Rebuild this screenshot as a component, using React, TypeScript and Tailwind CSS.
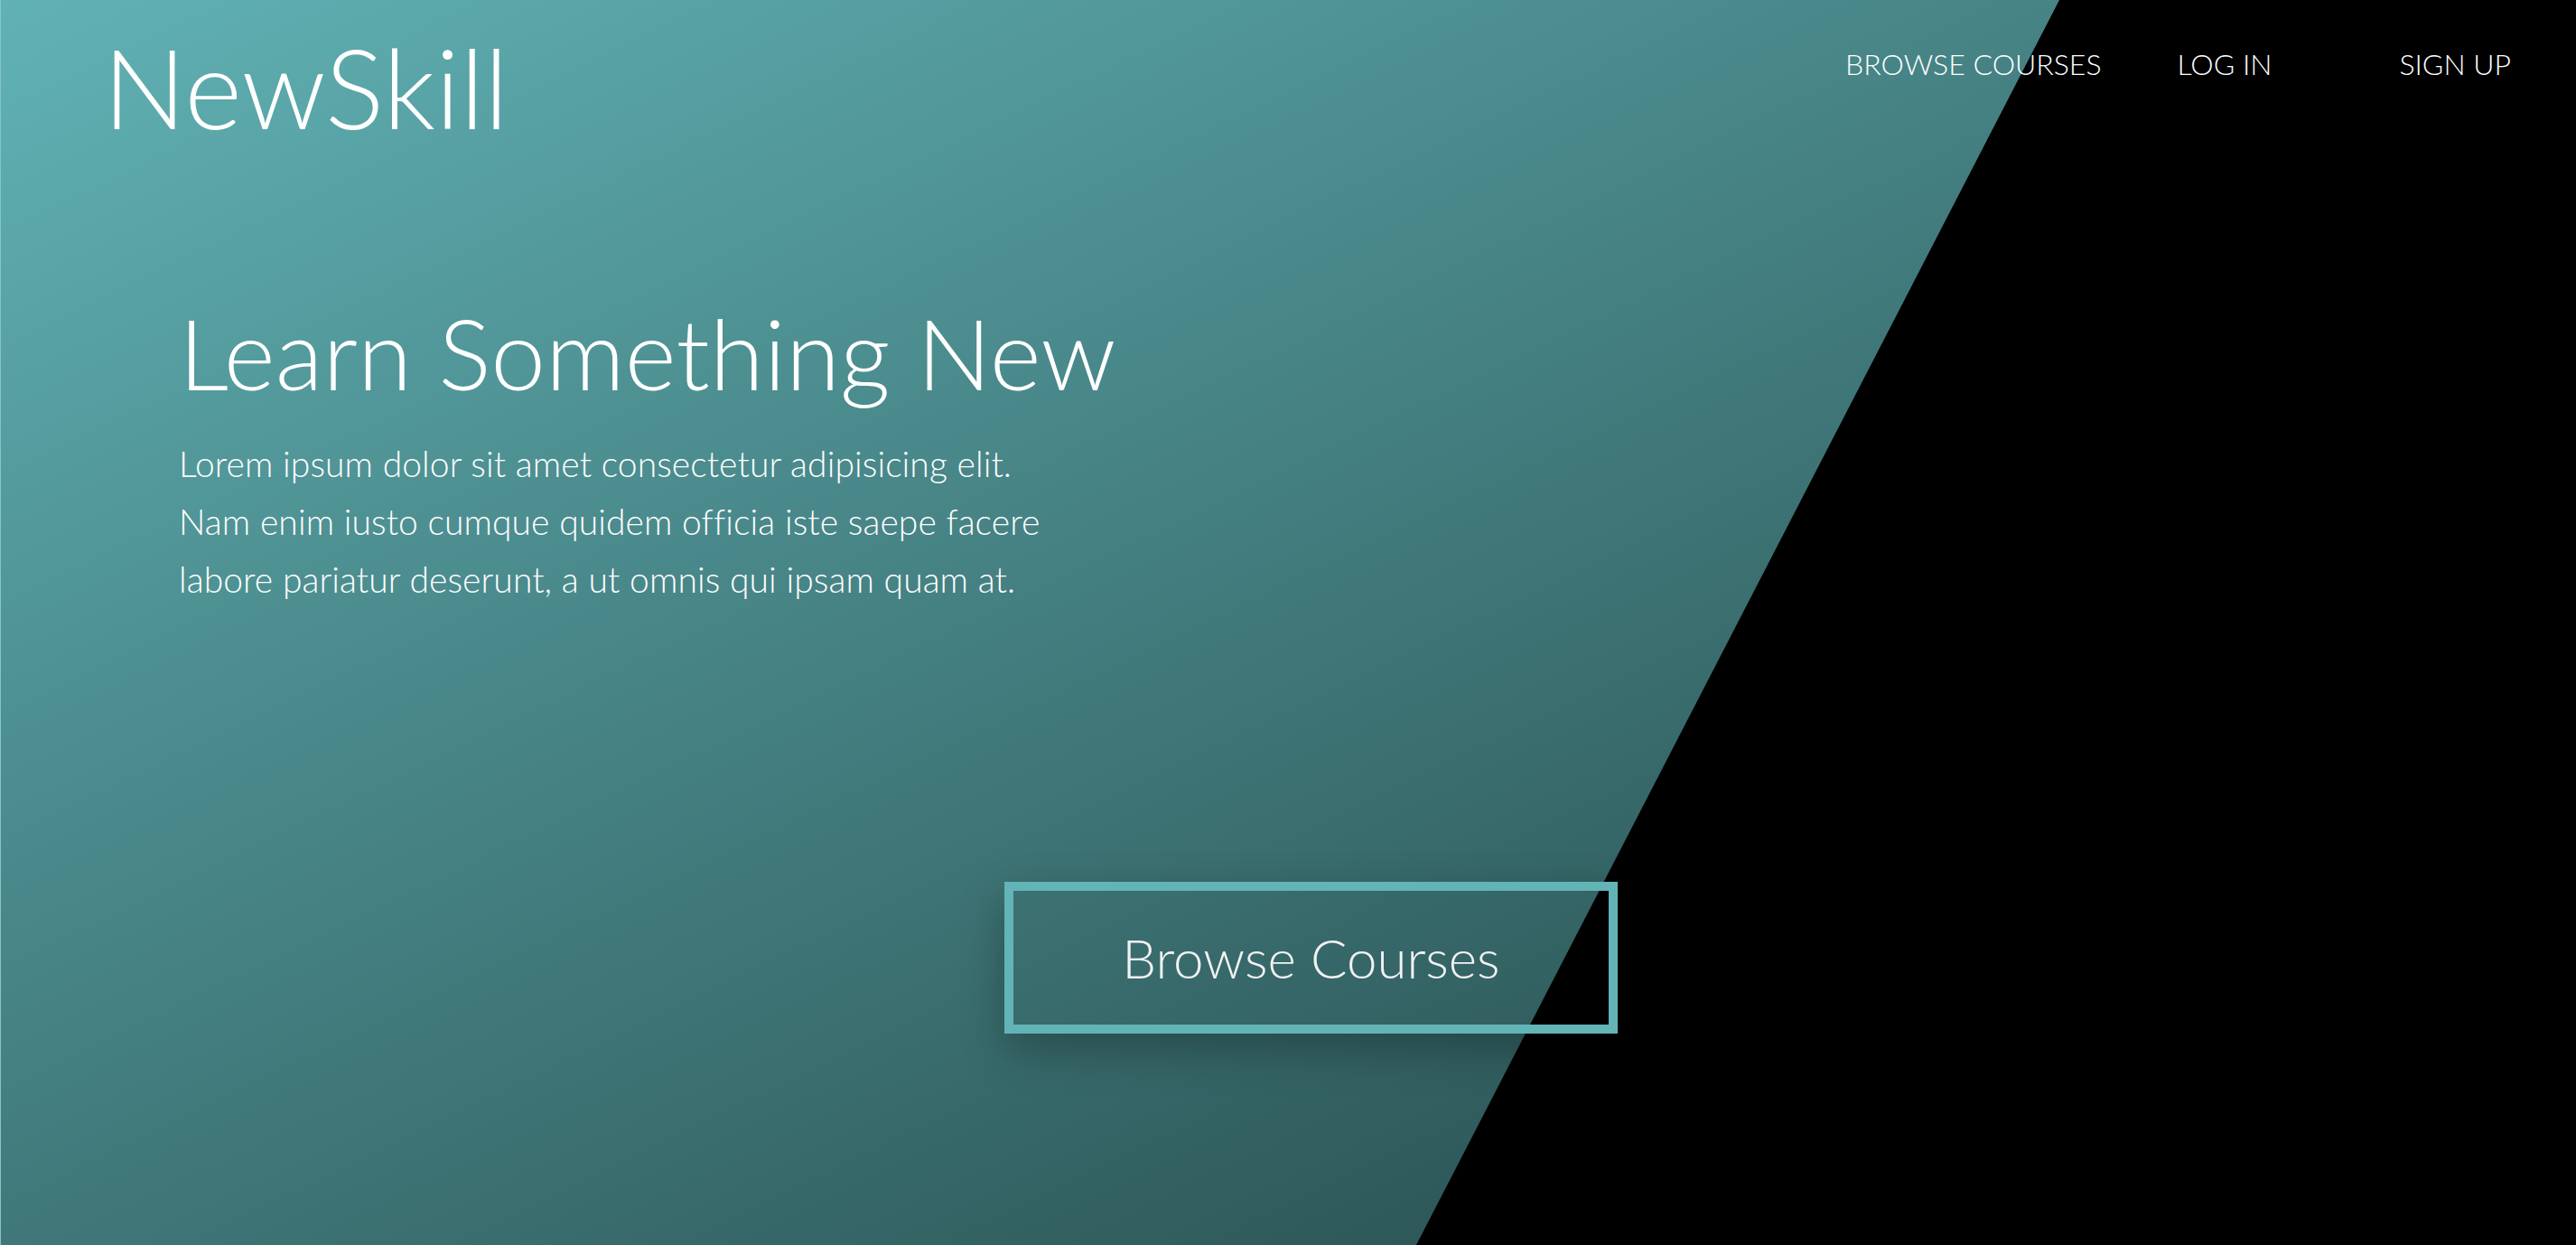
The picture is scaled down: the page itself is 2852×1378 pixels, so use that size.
import React from "react";

export default function App() {
  return (
    <div
      className="relative w-full h-[1378px] bg-black overflow-hidden text-white"
      style={{ fontFamily: "Lato, 'Open Sans', sans-serif" }}
    >
      <div
        className="absolute inset-0 border-l border-[#86c4c6] bg-[linear-gradient(to_right_bottom,#61b2b5,#1f3e3e)] [clip-path:polygon(0_0,2280px_0,1568px_100%,0_100%)]"
      />
      <div className="relative flex flex-col">
        <header className="flex justify-between items-start pt-[35px] pl-[114px] pr-[72px]">
          <div className="text-[122px] leading-none font-light tracking-normal">NewSkill</div>
          <nav className="flex mt-[20px] text-[32px] leading-none font-light">
            <a className="block">BROWSE COURSES</a>
            <a className="block ml-[84px]">LOG IN</a>
            <a className="block ml-[141px]">SIGN UP</a>
          </nav>
        </header>
        <section className="flex flex-col pl-[198px]">
          <h1 className="mt-[178px] text-[109px] leading-none font-light">Learn Something New</h1>
          <p className="mt-[37px] text-[39px] leading-[64px] font-light tracking-[0.002em]">
            Lorem ipsum dolor sit amet consectetur adipisicing elit.
            <br />
            Nam enim iusto cumque quidem officia iste saepe facere
            <br />
            labore pariatur deserunt, a ut omnis qui ipsam quam at.
          </p>
          <div className="mt-[303px] ml-[914px]">
            <button className="w-[679px] h-[168px] border-[10px] border-[#62b4b6] flex items-center justify-center text-[60px] font-light text-[#f2f2f2] shadow-[0_18px_45px_rgba(0,0,0,0.28)]">
              Browse Courses
            </button>
          </div>
        </section>
      </div>
    </div>
  );
}
